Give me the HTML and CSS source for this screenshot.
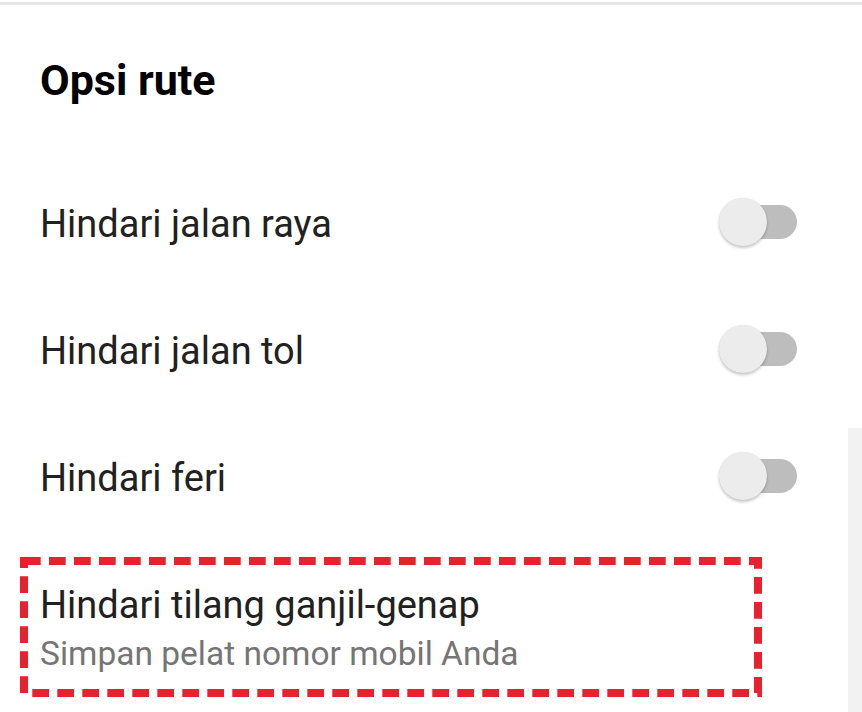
FILE: index.html
```html
<!DOCTYPE html>
<html lang="id">
<head>
<meta charset="utf-8">
<title>Opsi rute</title>
<link rel="stylesheet" href="styles.css">
</head>
<body>
<div class="page">
  <div class="topline"></div>
  <h1 class="heading">Opsi rute</h1>
  <ul class="options">
    <li class="row">
      <span class="label">Hindari jalan raya</span>
      <span class="switch"><span class="track"></span><span class="thumb"></span></span>
    </li>
    <li class="row">
      <span class="label">Hindari jalan tol</span>
      <span class="switch"><span class="track"></span><span class="thumb"></span></span>
    </li>
    <li class="row">
      <span class="label">Hindari feri</span>
      <span class="switch"><span class="track"></span><span class="thumb"></span></span>
    </li>
  </ul>
  <div class="highlight">
    <svg class="dash" width="742" height="140" viewBox="0 0 742 140" aria-hidden="true">
      <rect x="4" y="4" width="734" height="132" fill="none" stroke="#e5222e" stroke-width="8" stroke-dasharray="16.7 8.3"/>
    </svg>
    <div class="title">Hindari tilang ganjil-genap</div>
    <div class="subtitle">Simpan pelat nomor mobil Anda</div>
  </div>
  <div class="scrollbar"></div>
</div>
</body>
</html>
```
FILE: styles.css
```css
html, body {
  margin: 0;
  padding: 0;
  background: #ffffff;
}
.page {
  position: relative;
  width: 862px;
  height: 712px;
  overflow: hidden;
  font-family: Roboto, "Noto Sans", "Liberation Sans", sans-serif;
}
.topline {
  margin-top: 2px;
  height: 3px;
  background: #e6e6e6;
}
.heading {
  margin: 50px 0 0 0;
  padding-left: 40px;
  font-size: 43px;
  line-height: 50px;
  font-weight: 700;
  color: #000000;
}
.options {
  list-style: none;
  margin: 53px 0 0 0;
  padding: 0;
}
.row {
  height: 127px;
  display: flex;
  align-items: center;
  justify-content: space-between;
  padding: 0 65px 0 40px;
}
.label {
  padding-top: 5px;
  font-size: 38px;
  line-height: 45px;
  color: #212121;
}
.switch {
  position: relative;
  width: 78px;
  height: 48px;
  display: block;
}
.track {
  position: absolute;
  right: 0;
  top: 7px;
  width: 71px;
  height: 34px;
  border-radius: 17px;
  background: #bdbdbd;
}
.thumb {
  position: absolute;
  left: 0;
  top: 0;
  width: 48px;
  height: 48px;
  border-radius: 50%;
  background: #ececec;
  box-shadow: 0 2px 3px rgba(0, 0, 0, 0.22), 0 0 1px rgba(0, 0, 0, 0.12);
}
.highlight {
  position: relative;
  margin: 18px 0 0 20px;
  width: 742px;
  height: 140px;
  box-sizing: border-box;
  padding: 26px 0 0 20px;
}
.dash {
  position: absolute;
  left: 0;
  top: 0;
}
.title {
  font-size: 38px;
  line-height: 45px;
  color: #212121;
}
.subtitle {
  margin-top: 6px;
  font-size: 33.5px;
  line-height: 40px;
  color: #757575;
}
.scrollbar {
  position: absolute;
  right: 0;
  top: 428px;
  bottom: 0;
  width: 14px;
  background: #f2f2f2;
}
```
